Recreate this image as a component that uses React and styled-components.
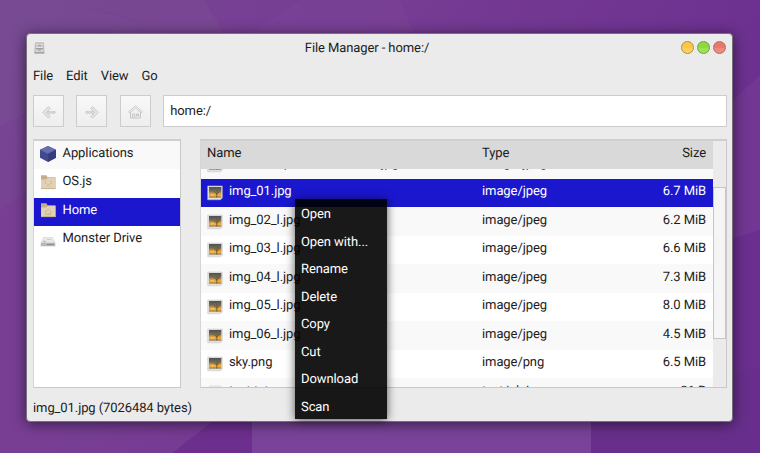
import React from "react";
import styled, { createGlobalStyle, css } from "styled-components";

const Global = createGlobalStyle`
  * { box-sizing: border-box; }
  body { margin: 0; overflow: hidden; }
`;

const Desktop = styled.main`
  position: relative;
  width: 760px;
  height: 453px;
  padding: 33px 27px 31px 26px;
  overflow: hidden;
  background: #743894;
  font: 13px/21px Roboto, "Liberation Sans", sans-serif;
  letter-spacing: -0.09px;
  text-rendering: geometricPrecision;
  color: #1c1c1c;
`;
const Wallpaper = styled.svg`
  position: absolute;
  inset: 0;
`;
const Window = styled.section`
  position: relative;
  display: flex;
  flex-direction: column;
  width: 707px;
  height: 389px;
  padding: 0 5px 0 6px;
  background: #ebebeb;
  border: 1px solid #77707a;
  border-radius: 4px;
  box-shadow: 0 2px 14px rgba(0, 0, 0, 0.55);
`;
const TitleBar = styled.header`
  display: grid;
  grid-template-columns: 60px 1fr 86px;
  align-items: center;
  height: 27px;
  padding: 0 1px;
`;
const Title = styled.h1`
  margin: 2px 0 0;
  font: inherit;
  text-align: center;
`;
const WindowButtons = styled.div`
  display: flex;
  justify-content: flex-end;
  gap: 3px;
`;
const WindowButton = styled.button`
  width: 12.9px;
  height: 12.9px;
  padding: 0;
  border: 1px solid ${(p) => p.$edge};
  border-radius: 50%;
  background: linear-gradient(${(p) => p.$top} 50%, ${(p) => p.$bottom} 50%);
`;
const MenuBar = styled.nav`
  display: flex;
  gap: 13px;
  height: 34px;
  padding-top: 5px;
`;
const MenuLabel = styled.span`
  line-height: 21px;
`;
const Toolbar = styled.div`
  display: flex;
  gap: 12.4px;
  height: 32px;
`;
const ToolButton = styled.button`
  display: grid;
  place-items: center;
  width: 31px;
  height: 32px;
  padding: 2px 0 0;
  border: 1px solid #ccc;
  background: linear-gradient(#f8f8f8, #eee);
`;
const PathInput = styled.input`
  flex: 1;
  min-width: 0;
  padding: 0 6px 2px;
  border: 1px solid #ccc;
  background: #fff;
  color: inherit;
  font: inherit;
  letter-spacing: inherit;
  outline: none;
`;
const Panels = styled.div`
  display: grid;
  grid-template-columns: 148px 527px;
  gap: 19px;
  height: 249px;
  margin-top: 12px;
`;
const Panel = styled.div`
  display: flex;
  overflow: hidden;
  border: 1px solid #c8c8c8;
  border-top: 2px solid #cfcfcf;
  border-left-color: #d5d5d5;
  background: #fff;
`;
const List = styled.div`
  flex: 1;
  min-width: 0;
`;
const rowSurface = css`
  background: ${(p) => (p.$selected ? "#1b17cf" : p.$striped ? "#f9f9f9" : "#fff")};
  color: ${(p) => (p.$selected ? "#fff" : "inherit")};
`;
const Place = styled.div`
  display: flex;
  gap: 6.5px;
  height: 28.4px;
  padding: 2px 6px 0;
  ${rowSurface}
`;
const columns = css`
  display: grid;
  grid-template-columns: 275px 1fr 90px;
  padding: 2.5px 7px 0 6px;
`;
const TableHead = styled.div`
  ${columns}
  padding-top: 2px;
  height: 28px;
  background: #d9d9d9;
`;
const TableBody = styled.div`
  height: 218px;
  overflow: hidden;
`;
const Scrolled = styled.div`
  margin-top: -18.7px;
`;
const FileRow = styled.div`
  ${columns}
  height: 28.5px;
  ${rowSurface}
`;
const NameCell = styled.div`
  display: flex;
  gap: 6px;
  white-space: nowrap;
`;
const Cell = styled.div`
  text-align: ${(p) => (p.$right ? "right" : "left")};
`;
const IconSlot = styled.span`
  display: block;
  flex: none;
  width: 16px;
  height: 16px;
  margin-top: ${(p) => p.$drop || 3}px;
  svg { display: block; }
`;
const ScrollTrack = styled.div`
  width: 13px;
  padding-top: 46px;
  background: #ebebeb;
`;
const ScrollThumb = styled.div`
  height: 152px;
  border: 1px solid #c6c6c6;
  background: #f5f5f5;
`;
const StatusBar = styled.footer`
  padding-top: 10px;
`;
const ContextMenu = styled.ul`
  position: absolute;
  left: 295px;
  top: 199px;
  width: 92px;
  height: 220px;
  margin: 0;
  padding: 0;
  list-style: none;
  background: rgba(0, 0, 0, 0.9);
  box-shadow: 0 1px 9px rgba(0, 0, 0, 0.65);
  color: #fff;
`;
const MenuItem = styled.li`
  height: 27.5px;
  padding: 5px 6px 0;
`;

const BoxIcon = () => (
  <svg width="16" height="16" viewBox="0 0 16 16">
    <path d="M8 0l8 3.8v8L8 16l-8-4.2v-8z" fill="#414a8e" />
    <path d="M8 0l8 3.8-8 4-8-4z" fill="#686daf" />
    <path d="M8 7.8l8-4v8L8 16z" fill="#353d7e" />
  </svg>
);
const FolderIcon = ({ home }) => (
  <svg width="16" height="16" viewBox="0 0 16 16">
    <path d="M1 1.2h5.5l1 2H15.5V15H1z" fill="#c5ae89" />
    <path d="M1 5.5h5l1.5-1.5H15.5V15H1z" fill="#e2d1b3" />
    <path d="M1 14.6h14.5" stroke="#c8b38f" />
    <g fill="none" stroke="#c6b08b" strokeWidth=".8">
      {home ? (
        <path d="M5 10l3.3-2.8L11.5 10M5.8 9.8v2.8h5V9.8M8.3 12.5v-2" />
      ) : (
        <path d="M4.5 7.5h1.5M10.5 7.5H12M5 9.5h1.5M10 9.5h1.5M7.5 10.5h1.5M6.5 12h1M9.3 12h1" />
      )}
    </g>
  </svg>
);
const DriveIcon = () => (
  <svg width="16" height="16" viewBox="0 0 16 16">
    <path d="M3.5 5h9L15.5 11v3.5H.5V11z" fill="#d8d8d8" />
    <path d="M4 5.5h8l2 4.5H2z" fill="#e9e9e9" />
    <path d="M1 11h14v3H1z" fill="#b7b7b7" />
    <path d="M7 12.5h7" stroke="#8e8e8e" />
    <path d="M3.5 9.5h2" stroke="#d9a45b" strokeWidth="1.4" />
    <path d="M7 7.5h4" stroke="#ccc" />
  </svg>
);
const ImageIcon = () => (
  <svg width="16" height="16" viewBox="0 0 16 16">
    <defs>
      <linearGradient id="dusk" x1="0" y1="0" x2="0" y2="1">
        <stop offset="0" stopColor="#50524f" />
        <stop offset=".38" stopColor="#6f695b" />
        <stop offset=".62" stopColor="#d79a3e" />
        <stop offset=".85" stopColor="#f0b245" />
        <stop offset="1" stopColor="#7b5a2d" />
      </linearGradient>
    </defs>
    <path d="M.7 1h14.6v12l-1.8 1.8H.7z" fill="#e2e0db" stroke="#c4c4c4" strokeWidth=".5" />
    <path d="M2 2h12.3v10.5H2z" fill="url(#dusk)" />
    <path d="M9.8 12.5V8.5M7 6.5l2.8 2.3 2.8-2.3M10 5.5v3" fill="none" stroke="#5a4b31" strokeWidth=".8" />
    <path d="M4 9.7h3" stroke="#ffd66b" strokeWidth=".8" />
  </svg>
);
const TextIcon = () => (
  <svg width="16" height="16" viewBox="0 0 16 16">
    <path d="M2.5 1h11v14h-11z" fill="#f0f0f0" stroke="#ddd" />
  </svg>
);
const CabinetIcon = () => (
  <svg width="11" height="12" viewBox="0 0 11 12">
    <path d="M1.5.7h8l.7 10.6H.5z" fill="#c7c7c7" stroke="#b0b0b0" strokeWidth=".6" />
    <path d="M2 2.5h7M2 5.5h7M1.5 9h8" stroke="#e2e2e2" />
    <path d="M4 3.3h3M2 6.6h7M4 8h3M1 10.8h9" stroke="#999" />
  </svg>
);
const ArrowIcon = ({ forward }) => (
  <svg width="14" height="13" viewBox="0 0 14 13">
    <g transform={forward ? "translate(14 0) scale(-1 1)" : undefined} fill="#e6e6e6" stroke="#c3c3c3" strokeWidth=".9">
      <path d="M6.5.7L.8 6.4l5.7 5.7 1.7-1.7-2.6-2.6L4.4 6.4l3.8-4z" />
      <circle cx="6.7" cy="6.4" r="1.1" />
      <circle cx="9.4" cy="6.4" r="1.1" />
      <circle cx="12.1" cy="6.4" r="1.1" />
    </g>
  </svg>
);
const HomeIcon = () => (
  <svg width="15" height="14" viewBox="0 0 15 14">
    <path d="M2.6 6v7h9.8V6" fill="#f1f1f1" stroke="#c4c4c4" />
    <path d="M.7 6.8L7.5.9l6.8 5.9-1.1 1.1-5.7-4.8-5.7 4.8z" fill="#f3f3f3" stroke="#c4c4c4" strokeWidth=".9" />
    <path d="M4.7 12.5V9h2v3.5M8.5 9h2v2h-2z" fill="none" stroke="#bdbdbd" strokeWidth=".9" />
  </svg>
);

const places = [
  { name: "Applications", icon: <BoxIcon />, drop: 3 },
  { name: "OS.js", icon: <FolderIcon />, drop: 2.6 },
  { name: "Home", icon: <FolderIcon home />, drop: 2.6 },
  { name: "Monster Drive", icon: <DriveIcon />, drop: 3.5 },
];
const files = [
  ["unsolved-planet-wide-dark.jpg", "image/jpeg", "2.2 MiB"],
  ["img_01.jpg", "image/jpeg", "6.7 MiB"],
  ["img_02_l.jpg", "image/jpeg", "6.2 MiB"],
  ["img_03_l.jpg", "image/jpeg", "6.6 MiB"],
  ["img_04_l.jpg", "image/jpeg", "7.3 MiB"],
  ["img_05_l.jpg", "image/jpeg", "8.0 MiB"],
  ["img_06_l.jpg", "image/jpeg", "4.5 MiB"],
  ["sky.png", "image/png", "6.5 MiB"],
  ["test.txt", "text/plain", "21 B"],
];
const actions = ["Open", "Open with...", "Rename", "Delete", "Copy", "Cut", "Download", "Scan"];

export default function App() {
  return (
    <Desktop>
      <Global />
      <Wallpaper width="760" height="453" viewBox="0 0 760 453">
        <defs>
          <linearGradient id="sky" x1="0" y1="0" x2="1" y2="0.3">
            <stop offset="0" stopColor="#774694" />
            <stop offset="0.5" stopColor="#763b93" />
            <stop offset="1" stopColor="#6b2f8f" />
          </linearGradient>
        </defs>
        <path d="M0 0h760v453H0z" fill="url(#sky)" />
        <path d="M0 0h62l72 21-70 75L0 126z" fill="#785092" opacity=".45" />
        <path d="M62 0h142l20 33H110l24-13z" fill="#794c91" opacity=".5" />
        <path d="M300 0h100l14 33H250z" fill="#794497" opacity=".5" />
        <path d="M0 210l60-40v283H0z" fill="#783e94" />
        <path d="M172 453l40-31h40v31z" fill="#6d2f8e" />
        <path d="M252 422h339v31H252z" fill="#784398" />
        <path d="M591 453v-60l169-25v85z" fill="#672f8b" />
        <path d="M733 100l27-25v155l-27 8z" fill="#713792" />
      </Wallpaper>
      <Window>
        <TitleBar>
          <CabinetIcon />
          <Title>File Manager - home:/</Title>
          <WindowButtons>
            <WindowButton $edge="#b48d3c" $top="#fac648" $bottom="#fdcf5d" aria-label="Minimize" />
            <WindowButton $edge="#67a43b" $top="#8fd840" $bottom="#9ee253" aria-label="Maximize" />
            <WindowButton $edge="#b76a60" $top="#e5796a" $bottom="#ee8a7d" aria-label="Close" />
          </WindowButtons>
        </TitleBar>
        <MenuBar>
          {["File", "Edit", "View", "Go"].map((m) => <MenuLabel key={m}>{m}</MenuLabel>)}
        </MenuBar>
        <Toolbar>
          <ToolButton aria-label="Back"><ArrowIcon /></ToolButton>
          <ToolButton aria-label="Forward"><ArrowIcon forward /></ToolButton>
          <ToolButton aria-label="Home"><HomeIcon /></ToolButton>
          <PathInput defaultValue="home:/" aria-label="Path" />
        </Toolbar>
        <Panels>
          <Panel>
            <List>
              {places.map((p, i) => (
                <Place key={p.name} $selected={i === 2} $striped={i % 2 === 0}>
                  <IconSlot $drop={p.drop}>{p.icon}</IconSlot>
                  {p.name}
                </Place>
              ))}
            </List>
          </Panel>
          <Panel>
            <List>
              <TableHead>
                <Cell>Name</Cell>
                <Cell>Type</Cell>
                <Cell $right>Size</Cell>
              </TableHead>
              <TableBody>
                <Scrolled>
                  {files.map(([name, type, size], i) => (
                    <FileRow key={name} $selected={i === 1} $striped={i % 2 === 0}>
                      <NameCell>
                        <IconSlot $drop={4}>{type === "text/plain" ? <TextIcon /> : <ImageIcon />}</IconSlot>
                        {name}
                      </NameCell>
                      <Cell>{type}</Cell>
                      <Cell $right>{size}</Cell>
                    </FileRow>
                  ))}
                </Scrolled>
              </TableBody>
            </List>
            <ScrollTrack>
              <ScrollThumb />
            </ScrollTrack>
          </Panel>
        </Panels>
        <StatusBar>img_01.jpg (7026484 bytes)</StatusBar>
      </Window>
      <ContextMenu>
        {actions.map((a) => <MenuItem key={a}>{a}</MenuItem>)}
      </ContextMenu>
    </Desktop>
  );
}
